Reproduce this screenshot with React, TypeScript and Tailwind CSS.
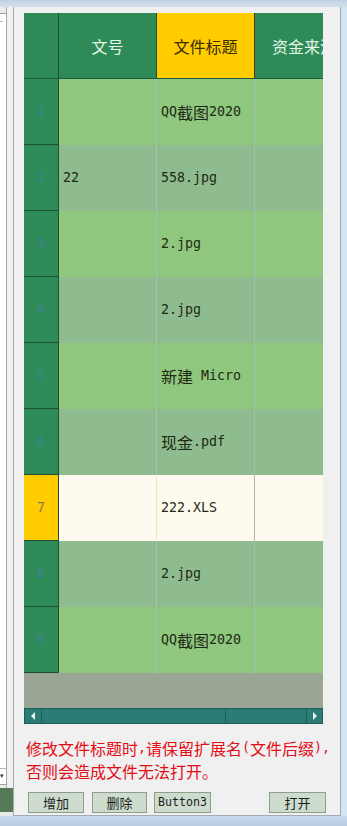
import React from "react";

const MONO = "font-['DejaVu_Sans_Mono',monospace] text-[13.3px]";
const MONO_SM = "font-['DejaVu_Sans_Mono',monospace] text-[11.6px]";

function T({ s, small }: { s: string; small?: boolean }) {
  const parts = s.match(/[\x00-\x7f]+|[^\x00-\x7f]+/g) || [];
  return (
    <>
      {parts.map((p, i) =>
        /^[\x00-\x7f]/.test(p) ? (
          <span key={i} className={small ? MONO_SM : MONO}>
            {p.replace(/ /g, "\u00a0")}
          </span>
        ) : (
          <span key={i}>{p}</span>
        )
      )}
    </>
  );
}

const rows: { a: string; b: string }[] = [
  { a: "", b: "QQ截图2020" },
  { a: "22", b: "558.jpg" },
  { a: "", b: "2.jpg" },
  { a: "", b: "2.jpg" },
  { a: "", b: "新建 Micro" },
  { a: "", b: "现金.pdf" },
  { a: "", b: "222.XLS" },
  { a: "", b: "2.jpg" },
  { a: "", b: "QQ截图2020" },
];

function Btn({ label, w }: { label: string; w: string }) {
  return (
    <div
      className={`${w} h-[21px] overflow-hidden flex items-center justify-center border border-[#8d9e8d] bg-[#cddccd] text-[13px] text-[#1c1c1c] leading-none`}
    >
      <T s={label} small />
    </div>
  );
}

export default function App() {
  return (
    <div className="w-[347px] h-[826px] overflow-hidden bg-[#d8e5f2] flex flex-col font-['Noto_Sans_CJK_SC',sans-serif]">
      <div className="h-[7px] shrink-0 bg-gradient-to-b from-[#c2d2e3] to-[#d3e0ed]" />
      <div className="flex h-[809px] shrink-0">
        {/* left strip */}
        <div className="w-[13px] flex flex-col shrink-0">
          <div className="flex-1 flex">
            <div className="w-[7px] flex flex-col bg-[#ececec] border-r border-[#a9a9a9]">
              <div className="h-[6px]" />
              <div className="flex-1 bg-white border-t border-[#a0a0a0] relative">
                <span className="absolute left-0 top-[3px] text-[8px] leading-none text-[#444]">-</span>
                <div className="absolute left-0 right-0 bottom-[2px] h-[14px] border-t border-[#b0b0b0] flex items-center">
                  <span className="text-[7px] leading-none text-[#333]">▾</span>
                </div>
              </div>
              <div className="h-[4px] bg-[#ececec] border-t border-[#a0a0a0]" />
            </div>
            <div className="flex-1 bg-[#f0f0f0]" />
          </div>
          <div className="h-[24px] bg-[#567a59]" />
          <div className="h-[4px] bg-[#e8e8e8]" />
        </div>

        {/* main panel */}
        <div className="w-[328px] shrink-0 bg-[#f0f0f0] border-l border-r border-b border-[#a4aab2] pl-[10px] pt-[6px] flex flex-col">
          <div className="w-[299px] flex flex-col">
            {/* header */}
            <div className="h-[66px] flex border-b border-[#1f5a3b] text-[16px]">
              <div className="w-[35px] bg-[#2e8b57] border-r border-[#1f4f33]" />
              <div className="w-[98px] bg-[#2e8b57] border-r border-[#1f4f33] flex items-center justify-center text-[#e4f6e8]">
                文号
              </div>
              <div className="w-[98px] bg-[#ffcc00] border-r border-[#4a3a10] flex items-center justify-center text-[#3a2c00]">
                文件标题
              </div>
              <div className="w-[68px] bg-[#2e8b57] overflow-hidden">
                <div className="w-[98px] h-full flex items-center justify-center text-[#e4f6e8] whitespace-nowrap">
                  资金来源
                </div>
              </div>
            </div>
            {/* rows */}
            {rows.map((r, i) => {
              const sel = i === 6;
              const bg = sel ? "bg-[#fffaf0]" : i % 2 === 0 ? "bg-[#90c77e]" : "bg-[#8fbc8f]";
              return (
                <div key={i} className="h-[66px] flex text-[16px] text-[#1e2a14]">
                  <div
                    className={`w-[35px] border-r border-b border-[#1f4f33] flex items-center justify-center ${
                      sel ? "bg-[#ffcc00] text-[#8a7a48]" : "bg-[#2e8b57] text-[#3a8591]"
                    }`}
                  >
                    <span className={MONO}>{i + 1}</span>
                  </div>
                  <div
                    className={`w-[98px] pl-[4px] flex items-center whitespace-nowrap border-r ${bg} ${
                      sel ? "border-[#efe6be]" : "border-[#a5c2b3]"
                    }`}
                  >
                    <T s={r.a} />
                  </div>
                  <div
                    className={`w-[98px] pl-[4px] flex items-center whitespace-nowrap overflow-hidden border-r ${bg} ${
                      sel ? "border-[#b4b4a8]" : "border-[#a5c2b3]"
                    }`}
                  >
                    <T s={r.b} />
                  </div>
                  <div className={`flex-1 ${bg}`} />
                </div>
              );
            })}
            {/* filler */}
            <div className="h-[35px] bg-[#9aa596]" />
            {/* scrollbar */}
            <div className="h-[16px] flex bg-[#2b7b76] border border-[#1d5c58]">
              <div className="w-[17px] border-r border-[#1d5c58] flex items-center justify-center">
                <svg width="6" height="8" viewBox="0 0 6 8">
                  <path d="M5 0 L1 4 L5 8 Z" fill="#e8f4f2" />
                </svg>
              </div>
              <div className="w-[184px] border-r border-[#1d5c58]" />
              <div className="flex-1" />
              <div className="w-[16px] border-l border-[#1d5c58] flex items-center justify-center">
                <svg width="6" height="8" viewBox="0 0 6 8">
                  <path d="M1 0 L5 4 L1 8 Z" fill="#e8f4f2" />
                </svg>
              </div>
            </div>
          </div>

          {/* red text */}
          <div className="mt-[12px] pl-[2px] text-[16px] text-[#e30d17] whitespace-nowrap">
            <div className="h-[23px] flex items-center">
              <T s="修改文件标题时,请保留扩展名(文件后缀)," />
            </div>
            <div className="h-[23px] flex items-center">
              <T s="否则会造成文件无法打开。" />
            </div>
          </div>

          {/* buttons */}
          <div className="mt-[10px] ml-[4px] h-[21px] flex">
            <Btn label="增加" w="w-[56px]" />
            <div className="w-[8px]" />
            <Btn label="删除" w="w-[55px]" />
            <div className="w-[7px]" />
            <Btn label="Button3" w="w-[57px]" />
            <div className="w-[58px]" />
            <Btn label="打开" w="w-[57px]" />
          </div>
        </div>

        {/* right strip */}
        <div className="flex-1 bg-[#d6e3f0]" />
      </div>
      <div className="flex-1 bg-gradient-to-b from-[#c9d9ea] to-[#b9cde3]" />
    </div>
  );
}
